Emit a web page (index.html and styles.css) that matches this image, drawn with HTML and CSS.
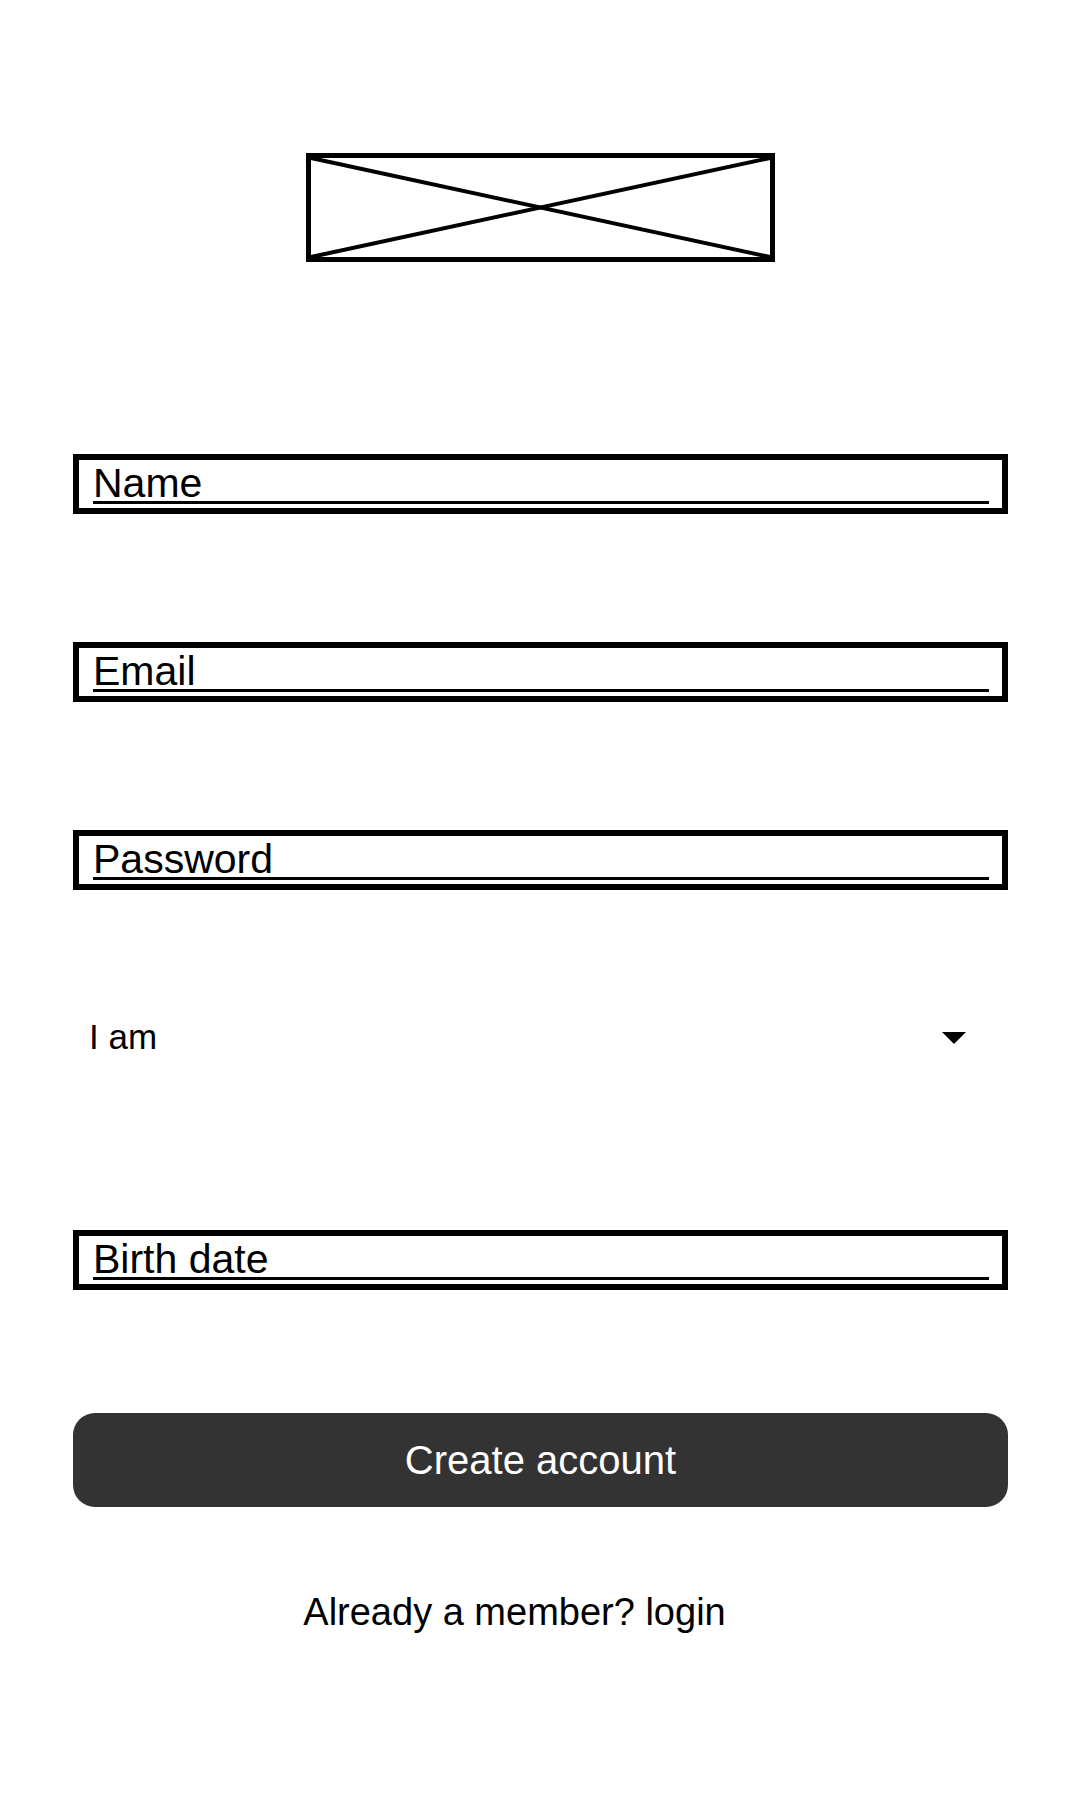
FILE: index.html
```html
<!DOCTYPE html>
<html lang="en">
<head>
<meta charset="UTF-8">
<meta name="viewport" content="width=device-width, initial-scale=1">
<title>Create account</title>
<link rel="stylesheet" href="styles.css">
</head>
<body>
<div class="signup">

  <div class="logo">
    <svg width="469" height="109" viewBox="0 0 469 109">
      <rect x="2.5" y="2.5" width="464" height="104" fill="none" stroke="#000" stroke-width="5"/>
      <line x1="5" y1="5" x2="464" y2="104" stroke="#000" stroke-width="4"/>
      <line x1="5" y1="104" x2="464" y2="5" stroke="#000" stroke-width="4"/>
    </svg>
  </div>

  <form class="form">
    <label class="field"><input type="text" placeholder="Name"></label>
    <label class="field"><input type="email" placeholder="Email"></label>
    <label class="field"><input type="password" placeholder="Password"></label>

    <div class="select-wrap">
      <select>
        <option>I am</option>
        <option>Student</option>
        <option>Teacher</option>
      </select>
      <svg class="caret" width="24" height="12" viewBox="0 0 24 12"><path d="M0 0H24L12 12Z" fill="#000"/></svg>
    </div>

    <label class="field birth"><input type="text" placeholder="Birth date"></label>

    <button type="button" class="btn">Create account</button>
  </form>

  <p class="member">Already a member? login</p>
</div>
</body>
</html>
```

FILE: styles.css
```css
/* signup wireframe */

body {
  margin: 0;
  background: #fff;
  color: #000;
  font-family: "Liberation Sans", Arial, sans-serif;
}

.signup {
  padding: 153px 72px 0 73px;
}

.logo {
  display: flex;
  justify-content: center;
  height: 109px;
}

.logo svg {
  display: block;
}

.form {
  display: flex;
  flex-direction: column;
  margin-top: 192px;
}

.field {
  display: block;
  box-sizing: border-box;
  height: 60px;
  border: 6px solid #000;
  padding: 0 13px 4px 14px;
  margin-bottom: 128px;
}

.field input {
  display: block;
  box-sizing: border-box;
  width: 100%;
  height: 44px;
  margin: 0;
  padding: 5px 0 0;
  border: none;
  border-bottom: 3px solid #000;
  outline: none;
  background: none;
  font-family: inherit;
  font-size: 41px;
  color: #000;
}

.field input::placeholder {
  color: #000;
  opacity: 1;
}

.select-wrap {
  position: relative;
  height: 60px;
  margin-top: -12px;
  margin-bottom: 164px;
}

.select-wrap select {
  appearance: none;
  -webkit-appearance: none;
  display: block;
  width: 100%;
  height: 60px;
  margin: 0;
  padding: 0 0 0 16px;
  border: none;
  outline: none;
  background: #fff;
  font-family: inherit;
  font-size: 35px;
  color: #000;
}

.caret {
  position: absolute;
  right: 42px;
  top: 26px;
  pointer-events: none;
}

.field.birth {
  margin-bottom: 123px;
}

.btn {
  display: block;
  width: 100%;
  height: 94px;
  margin: 0;
  border: none;
  border-radius: 22px;
  background: #333;
  color: #fff;
  font-family: inherit;
  font-size: 40px;
}

.member {
  margin: 83px 0 0;
  padding-right: 52px;
  text-align: center;
  font-size: 38px;
  line-height: 44px;
}
```
